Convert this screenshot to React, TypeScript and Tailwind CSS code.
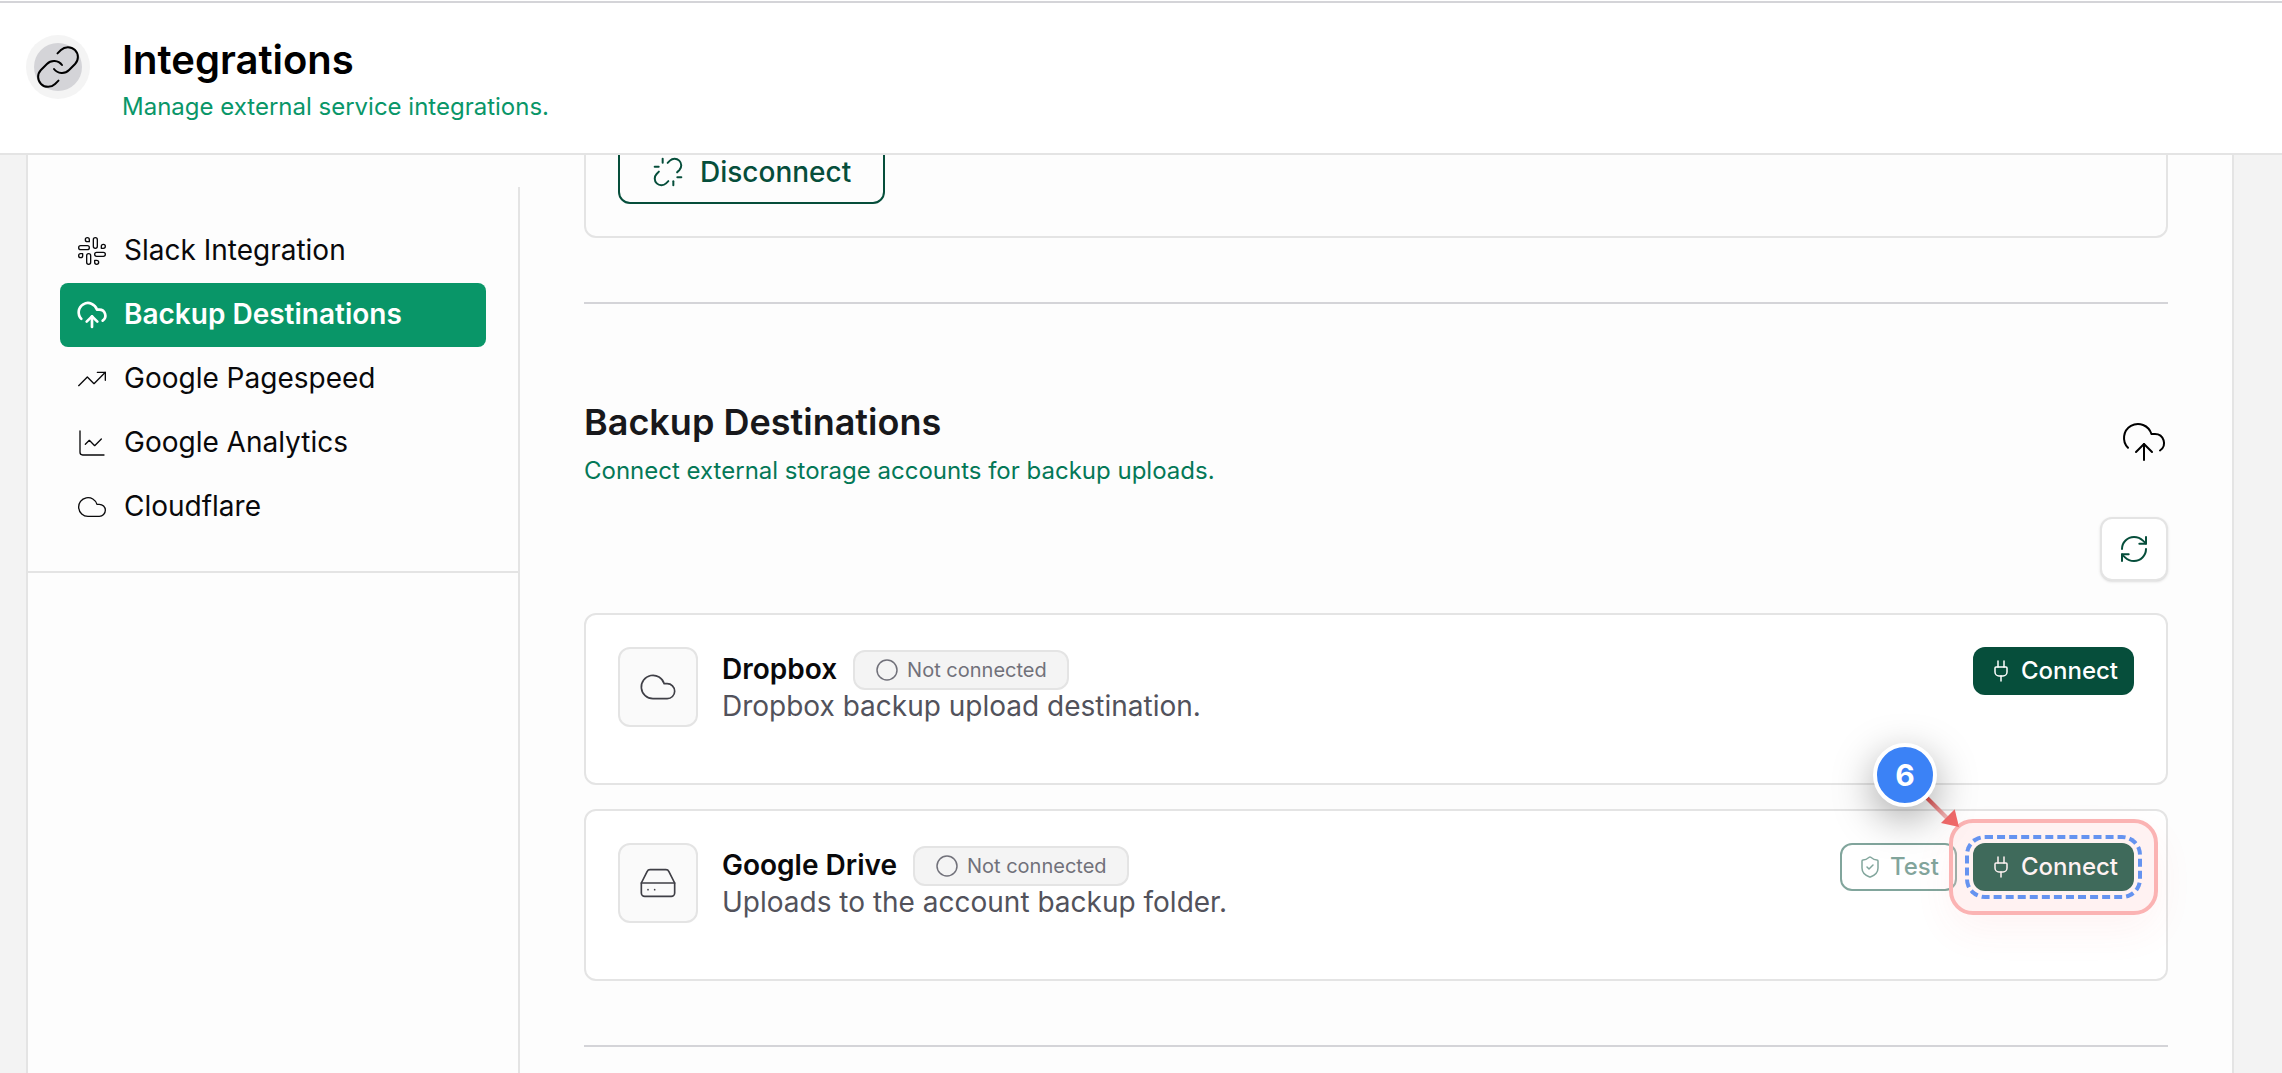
import type { ReactNode } from "react";
import {
  ChartLine,
  Circle,
  Cloud,
  CloudUpload,
  HardDrive,
  Link,
  Plug,
  RefreshCw,
  ShieldCheck,
  Slack,
  TrendingUp,
  Unlink,
  type LucideIcon,
} from "lucide-react";

const navItems: { label: string; icon: LucideIcon; active?: boolean }[] = [
  { label: "Slack Integration", icon: Slack },
  { label: "Backup Destinations", icon: CloudUpload, active: true },
  { label: "Google Pagespeed", icon: TrendingUp },
  { label: "Google Analytics", icon: ChartLine },
  { label: "Cloudflare", icon: Cloud },
];

function PageHeader() {
  return (
    <header className="relative z-10 flex shrink-0 items-start gap-8 border-b-2 border-[#e4e4e4] bg-white px-[26px] pt-8 pb-[30px]">
      <div className="flex size-16 items-center justify-center rounded-full bg-[#f4f4f4]">
        <div className="flex size-12 items-center justify-center rounded-full bg-[#d4d4d8]">
          <Link className="size-12 shrink-0" strokeWidth={1} />
        </div>
      </div>
      <div>
        <h1 className="text-[40px] leading-[50px] font-semibold">Integrations</h1>
        <p className="mt-1.5 text-2xl text-[#099668]">Manage external service integrations.</p>
      </div>
    </header>
  );
}

function Sidebar() {
  return (
    <aside className="flex w-[492px] shrink-0 flex-col pt-8">
      <nav className="border-r-2 border-b-2 border-[#e4e4e4] p-8">
        {navItems.map(({ label, icon: Icon, active }) => (
          <a
            key={label}
            href="#"
            aria-current={active ? "page" : undefined}
            className={
              active
                ? "flex h-16 items-center gap-4 rounded-lg bg-[#099668] px-4 text-[28px] font-semibold text-white"
                : "flex h-16 items-center gap-4 rounded-lg px-4 text-[28px] text-[#09090b]"
            }
          >
            <Icon className="size-8 shrink-0" strokeWidth={active ? 2 : 1} />
            <span className="pb-0.5">{label}</span>
          </a>
        ))}
      </nav>
      <div className="flex-1 border-r-2 border-[#e4e4e4]" />
    </aside>
  );
}

function ConnectButton() {
  return (
    <button className="flex h-12 items-center gap-2 rounded-xl bg-[#064e3b] px-4 text-2xl font-medium text-white">
      <Plug className="size-6 shrink-0" strokeWidth={1.5} />
      Connect
    </button>
  );
}

function StepMarker({ step, children }: { step: number; children: ReactNode }) {
  return (
    <div className="relative">
      {children}
      <div className="pointer-events-none absolute -inset-6 rounded-3xl border-4 border-[#fbb3b3] bg-[#fdc8c63b] shadow-[0_16px_40px_rgba(239,68,68,0.06)]" />
      <div className="pointer-events-none absolute -inset-2 rounded-[20px] border-4 border-dashed border-[#6593f0]" />
      <svg className="pointer-events-none absolute -top-12 -left-12 size-9" viewBox="0 0 36 36" aria-hidden="true">
        <defs>
          <linearGradient id="arrow-shaft" gradientUnits="userSpaceOnUse" x1="2" y1="3" x2="24" y2="25">
            <stop offset="0" stopColor="#e05252" />
            <stop offset="1" stopColor="#f5c8c8" />
          </linearGradient>
        </defs>
        <path d="M2 3 22 23" stroke="url(#arrow-shaft)" strokeWidth="4" />
        <path d="M29.7 14.3 16 28l18 4z" fill="#f26b6b" />
      </svg>
      <div className="pointer-events-none absolute -top-[100px] -left-[100px] flex size-16 items-center justify-center rounded-full border-4 border-white bg-[#3b82f6] text-[30px] font-bold text-white shadow-[0_12px_40px_rgba(0,0,0,0.35)]">
        {step}
      </div>
    </div>
  );
}

function DestinationCard({
  icon: Icon,
  name,
  description,
  children,
}: {
  icon: LucideIcon;
  name: string;
  description: string;
  children: ReactNode;
}) {
  return (
    <article className="flex min-h-[172px] items-start gap-6 rounded-xl border-2 border-[#e4e4e4] bg-white p-8">
      <div className="flex size-20 shrink-0 items-center justify-center rounded-xl border-2 border-[#e4e4e4] bg-[#fafafa] text-[#3f3f46]">
        <Icon className="size-10" strokeWidth={1} />
      </div>
      <div className="min-w-0 flex-1 pt-[3px]">
        <div className="flex items-center gap-4">
          <h3 className="pb-0.5 text-[28px] leading-9 font-semibold text-[#09090b]">{name}</h3>
          <span className="flex h-10 items-center gap-2 rounded-xl border-2 border-[#e4e4e4] bg-[#f4f4f4] px-5 text-xl text-[#71717a]">
            <Circle className="size-6" strokeWidth={1.5} />
            Not connected
          </span>
        </div>
        <p className="-mt-1 text-[28px] leading-10 text-[#52525b]">{description}</p>
      </div>
      <div className="flex items-center gap-4">{children}</div>
    </article>
  );
}

export default function App() {
  return (
    <div className="flex h-screen flex-col overflow-hidden border-t border-white bg-[#f3f3f3] font-['Inter',sans-serif] text-black">
      <div className="h-0.5 shrink-0 bg-[#d4d4d8]" />
      <PageHeader />
      <div className="flex min-h-0 flex-1 pr-12 pl-[26px]">
        <div className="flex min-w-0 flex-1 border-x-2 border-[#e4e4e4] bg-[#fdfdfd]">
          <Sidebar />
          <main className="min-w-0 flex-1 px-16">
            <section className="-mt-[49px] rounded-xl border-2 border-[#e4e4e4] p-8">
              <button className="flex h-16 items-center gap-4 rounded-xl border-2 border-[#064e3b] px-8 text-[28px] font-medium text-[#064e3b]">
                <Unlink className="size-8" strokeWidth={1.5} />
                Disconnect
              </button>
            </section>
            <hr className="my-16 border-t-2 border-[#d4d4d8]" />
            <section className="pt-8">
              <div className="flex items-start justify-between">
                <div>
                  <h2 className="text-4xl leading-[44px] font-semibold text-[#18181b]">Backup Destinations</h2>
                  <p className="mt-[11px] text-2xl text-[#047857]">Connect external storage accounts for backup uploads.</p>
                </div>
                <CloudUpload className="mt-[18px] size-12 shrink-0" strokeWidth={1} />
              </div>
              <div className="mt-[30px] flex justify-end">
                <button
                  aria-label="Refresh"
                  className="flex h-16 w-[68px] items-center justify-center rounded-xl border-2 border-[#e4e4e4] bg-white text-[#064e3b] shadow-sm"
                >
                  <RefreshCw className="size-8" strokeWidth={1.5} />
                </button>
              </div>
              <div className="mt-8 flex flex-col gap-6">
                <DestinationCard icon={Cloud} name="Dropbox" description="Dropbox backup upload destination.">
                  <ConnectButton />
                </DestinationCard>
                <DestinationCard icon={HardDrive} name="Google Drive" description="Uploads to the account backup folder.">
                  <button
                    disabled
                    className="flex h-12 items-center gap-2 rounded-xl border-2 border-[#064e3b] px-4 text-2xl font-medium text-[#064e3b] opacity-50"
                  >
                    <ShieldCheck className="size-6" strokeWidth={1.5} />
                    Test
                  </button>
                  <StepMarker step={6}>
                    <ConnectButton />
                  </StepMarker>
                </DestinationCard>
              </div>
            </section>
            <hr className="my-16 border-t-2 border-[#d4d4d8]" />
          </main>
        </div>
      </div>
    </div>
  );
}
